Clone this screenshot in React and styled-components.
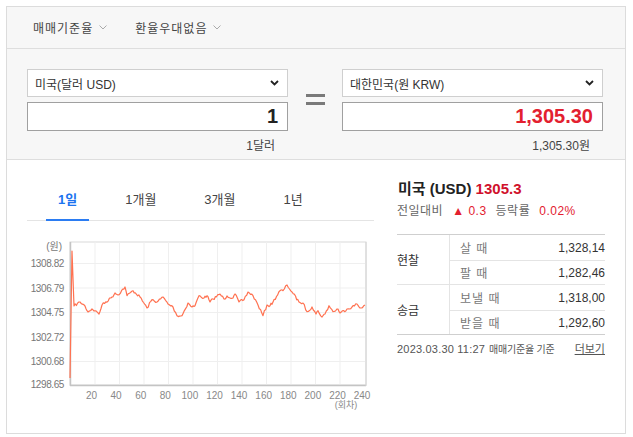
import React from "react";
import styled, { createGlobalStyle } from "styled-components";

const Global = createGlobalStyle`
  html, body { margin: 0; padding: 0; background: #fff; }
  body { font-family: "Liberation Sans", "Noto Sans CJK KR", sans-serif; color: #333; }
  * { box-sizing: border-box; }
`;

const Box = styled.div`
  margin: 6px;
  width: 620px;
  height: 428px;
  border: 1px solid #dcdcdc;
  display: flex;
  flex-direction: column;
`;

const FilterBar = styled.div`
  height: 42px;
  background: #f7f7f7;
  border-bottom: 1px solid #dedede;
  display: flex;
  align-items: center;
  padding-left: 26px;
  gap: 28px;
`;

const FilterItem = styled.div`
  display: flex;
  align-items: center;
  font-size: 12px;
  letter-spacing: 1px;
  color: #444;
  gap: 6px;
`;

const Converter = styled.div`
  height: 111px;
  background: #f7f7f7;
  border-bottom: 1px solid #dedede;
  display: flex;
  padding: 20px 0 0 20px;
`;

const Col = styled.div`
  width: 261px;
  display: flex;
  flex-direction: column;
`;

const Select = styled.div`
  height: 28px;
  background: #fff;
  border: 1px solid #cfcfcf;
  display: flex;
  align-items: center;
  justify-content: space-between;
  padding: 0 8px 0 7px;
  font-size: 12px;
  color: #333;
`;

const Input = styled.div`
  margin-top: 5px;
  height: 29px;
  background: #fff;
  border: 1px solid #a0a0a0;
  display: flex;
  align-items: center;
  justify-content: flex-end;
  padding-right: 9px;
  font-size: 20px;
  font-weight: bold;
  color: ${(p) => (p.$red ? "#e3202f" : "#222")};
`;

const Caption = styled.div`
  margin-top: 7px;
  text-align: right;
  padding-right: 13px;
  font-size: 12px;
  line-height: 16px;
  color: #444;
`;

const Equal = styled.div`
  width: 54px;
  height: 57px;
  display: flex;
  flex-direction: column;
  align-items: center;
  justify-content: center;
  gap: 5px;
  padding-top: 3px;
`;

const Bar = styled.div`
  width: 19px;
  height: 3px;
  background: #7a7a7a;
`;

const Bottom = styled.div`
  flex: 1;
  display: flex;
  padding-left: 20px;
  background: #fff;
`;

const ChartCol = styled.div`
  width: 347px;
  display: flex;
  flex-direction: column;
  padding-top: 26px;
`;

const Tabs = styled.div`
  height: 35px;
  border-bottom: 1px solid #e4e4e4;
  display: flex;
  gap: 24px;
  padding-left: 19px;
`;

const Tab = styled.div`
  height: 35px;
  padding: 5px 12px 0;
  font-size: 13px;
  line-height: 18px;
  margin-bottom: -1px;
  color: ${(p) => (p.$active ? "#1c74f0" : "#444")};
  font-weight: ${(p) => (p.$active ? "bold" : "normal")};
  border-bottom: 2px solid ${(p) => (p.$active ? "#2b7cf2" : "transparent")};
`;

const InfoCol = styled.div`
  width: 208px;
  margin-left: 23px;
  padding-top: 19px;
  display: flex;
  flex-direction: column;
`;

const Title = styled.div`
  font-size: 15px;
  line-height: 20px;
  font-weight: bold;
  color: #222;
  padding-left: 1px;
`;

const Red = styled.span`
  color: ${(p) => (p.$dark ? "#d0112b" : "#e3202f")};
  font-weight: ${(p) => (p.$bold ? "bold" : "normal")};
`;

const Sub = styled.div`
  margin-top: 3px;
  font-size: 12px;
  line-height: 18px;
  letter-spacing: 0.5px;
  color: #666;
  display: flex;
  align-items: center;
  gap: 9px;
`;

const Table = styled.div`
  margin-top: 14px;
  border-top: 1px solid #cfcfcf;
  border-bottom: 1px solid #cfcfcf;
`;

const Group = styled.div`
  display: flex;
  & + & { border-top: 1px solid #e4e4e4; }
`;

const GroupLabel = styled.div`
  width: 53px;
  border-right: 1px solid #e4e4e4;
  display: flex;
  align-items: center;
  font-size: 12px;
  color: #333;
`;

const Rows = styled.div`
  flex: 1;
  display: flex;
  flex-direction: column;
`;

const Row = styled.div`
  height: 25px;
  display: flex;
  align-items: center;
  justify-content: space-between;
  padding-left: 10px;
  font-size: 12px;
  & + & { border-top: 1px solid #e4e4e4; height: 24px; }
`;

const RowLabel = styled.span`
  color: #777;
  letter-spacing: 1px;
`;

const RowValue = styled.span`
  color: #333;
`;

const Footer = styled.div`
  margin-top: 5px;
  display: flex;
  justify-content: space-between;
  align-items: center;
  line-height: 16px;
  color: #555;
`;

const Stamp = styled.span`
  font-size: 11px;
  letter-spacing: 0.2px;
`;

const StampNote = styled.span`
  font-size: 10px;
  letter-spacing: -0.2px;
  margin-left: 4px;
`;

const More = styled.a`
  font-size: 11px;
  color: #555;
  text-decoration: underline;
`;

const Chevron = () => (
  <svg width="9" height="6" viewBox="0 0 9 6">
    <path d="M1 1 L4.5 4.5 L8 1" fill="none" stroke="#222" strokeWidth="1.8" />
  </svg>
);

const ThinChevron = () => (
  <svg width="8" height="5" viewBox="0 0 8 5">
    <path d="M0.5 0.5 L4 4 L7.5 0.5" fill="none" stroke="#aaa" strokeWidth="1" />
  </svg>
);

// Key points of the line (global page coords)
const KEY = [
  [70, 379], [72, 252], [74, 307], [80, 303], [85, 307], [88, 313], [92, 310],
  [95, 311.7], [99, 315], [102, 306], [112, 298], [115, 294], [118, 296],
  [125, 288], [127, 296.7], [133, 291.7], [140, 298], [147, 309], [152, 300.7],
  [157, 303], [163, 298], [168, 305], [173, 308], [177, 316.7], [182, 316.7],
  [188, 304], [192, 308], [195, 306.7], [199, 296.7], [204, 299], [207, 296.7],
  [210, 303], [213, 300], [220, 295], [224, 300], [227, 297], [233, 299],
  [235, 295], [239, 303], [244, 300.7], [248, 293], [253, 296.7], [258, 306],
  [263, 316.7], [267, 306], [270, 306.7], [273, 303], [280, 291.7], [283, 291.7],
  [287, 286], [292, 293], [299, 303], [303, 304], [307, 312.7], [312, 308],
  [316, 315], [318, 311.7], [322, 318], [325, 315], [329, 306.7], [333, 312.7],
  [338, 310], [340, 314], [347, 310], [352, 308], [357, 305], [360, 309], [365, 306],
];

function buildPath() {
  let seed = 7;
  const rnd = () => {
    seed = (seed * 16807) % 2147483647;
    return seed / 2147483647;
  };
  const pts = [];
  KEY.forEach(([x, y], i) => {
    const lx = x - 27;
    const ly = y - 222;
    if (i < 3) {
      pts.push([lx, ly]);
      return;
    }
    const [px, py] = [KEY[i - 1][0] - 27, KEY[i - 1][1] - 222];
    const steps = Math.max(1, Math.round((lx - px) / 1.2));
    for (let s = 1; s <= steps; s++) {
      const t = s / steps;
      const nx = px + (lx - px) * t;
      const ny = py + (ly - py) * t + (s === steps ? 0 : (rnd() - 0.5) * 2.6);
      pts.push([nx, ny]);
    }
  });
  return pts.map(([x, y], i) => `${i ? "L" : "M"}${x.toFixed(1)} ${y.toFixed(1)}`).join(" ");
}

const LINE = buildPath();
const Y_LABELS = [
  ["1308.82", 42.5], ["1306.79", 67], ["1304.75", 91.5],
  ["1302.72", 116], ["1300.68", 140.5], ["1298.65", 163],
];

const Chart = () => (
  <svg width="347" height="190" viewBox="0 0 347 190" style={{ display: "block" }}>
    <rect x="43" y="21" width="296" height="143" fill="#fff" stroke="#dadada" strokeWidth="1" />
    {Array.from({ length: 11 }, (_, k) => (
      <line key={"v" + k} x1={68 + 24.5 * k} y1="21" x2={68 + 24.5 * k} y2="164" stroke="#efefef" />
    ))}
    {Y_LABELS.slice(0, 5).map(([, y]) => (
      <line key={"h" + y} x1="43" y1={y} x2="339" y2={y} stroke="#efefef" />
    ))}
    <line x1="43.5" y1="21" x2="43.5" y2="165" stroke="#c4c4c4" strokeWidth="1.5" />
    <line x1="43" y1="164.5" x2="339" y2="164.5" stroke="#c4c4c4" strokeWidth="1.5" />
    <line x1="339" y1="21" x2="339" y2="165" stroke="#d4d4d4" />
    <text x="35" y="29" textAnchor="end" fontSize="10" fill="#777"
      fontFamily='"Liberation Sans", "Noto Sans CJK KR", sans-serif'>(원)</text>
    {Y_LABELS.map(([t, y]) => (
      <text key={t} x="37" y={y + 3.5} textAnchor="end" fontSize="10" fill="#777" letterSpacing="-0.4"
        fontFamily='"Liberation Sans", sans-serif'>{t}</text>
    ))}
    {Array.from({ length: 12 }, (_, k) => (
      <text key={"x" + k} x={64.5 + 24.6 * k} y="178" textAnchor="middle" fontSize="10" fill="#888"
        fontFamily='"Liberation Sans", sans-serif'>{(k + 1) * 20}</text>
    ))}
    <text x="319" y="187" textAnchor="middle" fontSize="9" fill="#888"
      fontFamily='"Liberation Sans", "Noto Sans CJK KR", sans-serif'>(회차)</text>
    <path d={LINE} fill="none" stroke="#ff7251" strokeWidth="1.2" strokeLinejoin="round" />
  </svg>
);

export default function App() {
  return (
    <>
      <Global />
      <Box>
        <FilterBar>
          <FilterItem>매매기준율 <ThinChevron /></FilterItem>
          <FilterItem>환율우대없음 <ThinChevron /></FilterItem>
        </FilterBar>
        <Converter>
          <Col>
            <Select>미국(달러 USD)<Chevron /></Select>
            <Input>1</Input>
            <Caption>1달러</Caption>
          </Col>
          <Equal><Bar /><Bar /></Equal>
          <Col>
            <Select>대한민국(원 KRW)<Chevron /></Select>
            <Input $red>1,305.30</Input>
            <Caption>1,305.30원</Caption>
          </Col>
        </Converter>
        <Bottom>
          <ChartCol>
            <Tabs>
              <Tab $active>1일</Tab>
              <Tab>1개월</Tab>
              <Tab>3개월</Tab>
              <Tab>1년</Tab>
            </Tabs>
            <Chart />
          </ChartCol>
          <InfoCol>
            <Title>미국 (USD) <Red $dark $bold>1305.3</Red></Title>
            <Sub>
              <span>전일대비</span>
              <Red>▲ 0.3</Red>
              <span>등락률</span>
              <Red>0.02%</Red>
            </Sub>
            <Table>
              <Group>
                <GroupLabel>현찰</GroupLabel>
                <Rows>
                  <Row><RowLabel>살 때</RowLabel><RowValue>1,328,14</RowValue></Row>
                  <Row><RowLabel>팔 때</RowLabel><RowValue>1,282,46</RowValue></Row>
                </Rows>
              </Group>
              <Group>
                <GroupLabel>송금</GroupLabel>
                <Rows>
                  <Row><RowLabel>보낼 때</RowLabel><RowValue>1,318,00</RowValue></Row>
                  <Row><RowLabel>받을 때</RowLabel><RowValue>1,292,60</RowValue></Row>
                </Rows>
              </Group>
            </Table>
            <Footer>
              <span>
                <Stamp>2023.03.30 11:27</Stamp>
                <StampNote>매매기준율 기준</StampNote>
              </span>
              <More>더보기</More>
            </Footer>
          </InfoCol>
        </Bottom>
      </Box>
    </>
  );
}
